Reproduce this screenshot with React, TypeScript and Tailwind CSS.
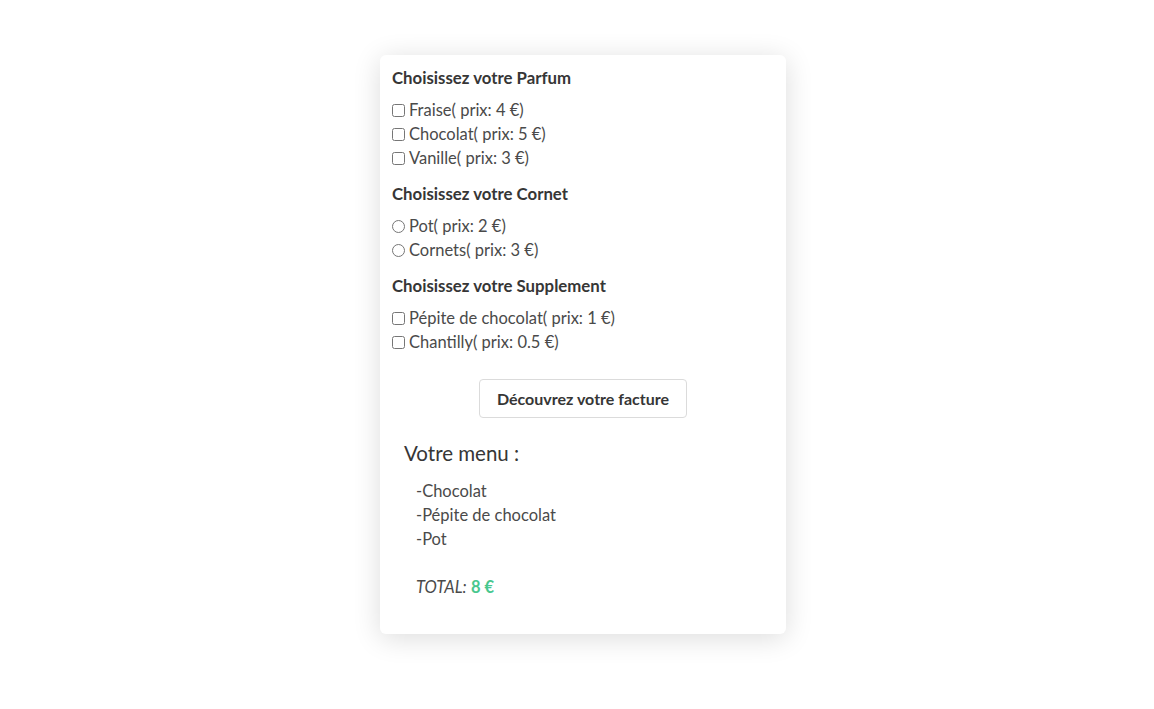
import { ReactElement } from "react"

type OptionType = {
    name: string,
    price: number,
}

const parfums: OptionType[] = [
    { name: "Fraise", price: 4 },
    { name: "Chocolat", price: 5 },
    { name: "Vanille", price: 3 },
]

const cornets: OptionType[] = [
    { name: "Pot", price: 2 },
    { name: "Cornets", price: 3 },
]

const supplements: OptionType[] = [
    { name: "Pépite de chocolat", price: 1 },
    { name: "Chantilly", price: 0.5 },
]

const menu: string[] = ["Chocolat", "Pépite de chocolat", "Pot"]

type GroupProps = {
    title: string,
    items: OptionType[],
    type: "checkbox" | "radio",
    first?: boolean,
}

const Group = ({ title, items, type, first }: GroupProps) => {
    const rows: ReactElement[] = items.map(item => {
        return (
            <label key={item.name} className="flex items-center h-6 leading-6">
                <input
                    type={type}
                    name={title}
                    className="w-[13px] h-[13px] mr-1 m-0"
                />
                <span>{item.name}( prix: {item.price} €)</span>
            </label>
        )
    })

    return (
        <section className={first ? "" : "mt-3"}>
            <h3 className="font-bold text-[#363636] text-[16.8px] leading-6 mb-2">{title}</h3>
            {rows}
        </section>
    )
}

const App = () => {
    return (
        <div className="min-h-screen bg-white flex justify-center pt-[55px] pl-3 font-['Lato','Liberation_Sans',sans-serif] text-[16.5px] text-[#4a4a4a]">
            <main className="w-[406px] h-[579px] bg-white rounded-md px-3 pt-[11px] shadow-[0_4px_28px_rgba(10,10,10,0.14)]">
                <Group title="Choisissez votre Parfum" items={parfums} type="checkbox" first />
                <Group title="Choisissez votre Cornet" items={cornets} type="radio" />
                <Group title="Choisissez votre Supplement" items={supplements} type="checkbox" />

                <div className="flex justify-center mt-[25px]">
                    <button className="h-[39px] w-[208px] border border-[#dbdbdb] rounded bg-white font-bold text-[#363636] text-[16px]">
                        Découvrez votre facture
                    </button>
                </div>

                <section className="px-3 mt-[20px]">
                    <h2 className="text-[20.5px] leading-[30px] text-[#363636]">Votre menu :</h2>
                    <ul className="pl-3 mt-[11px]">
                        {menu.map(m => <li key={m} className="leading-6">-{m}</li>)}
                    </ul>
                    <p className="pl-3 mt-6 leading-6">
                        <i>TOTAL:</i> <b className="text-[#48c78e]">8 €</b>
                    </p>
                </section>
            </main>
        </div>
    )
}

export default App
